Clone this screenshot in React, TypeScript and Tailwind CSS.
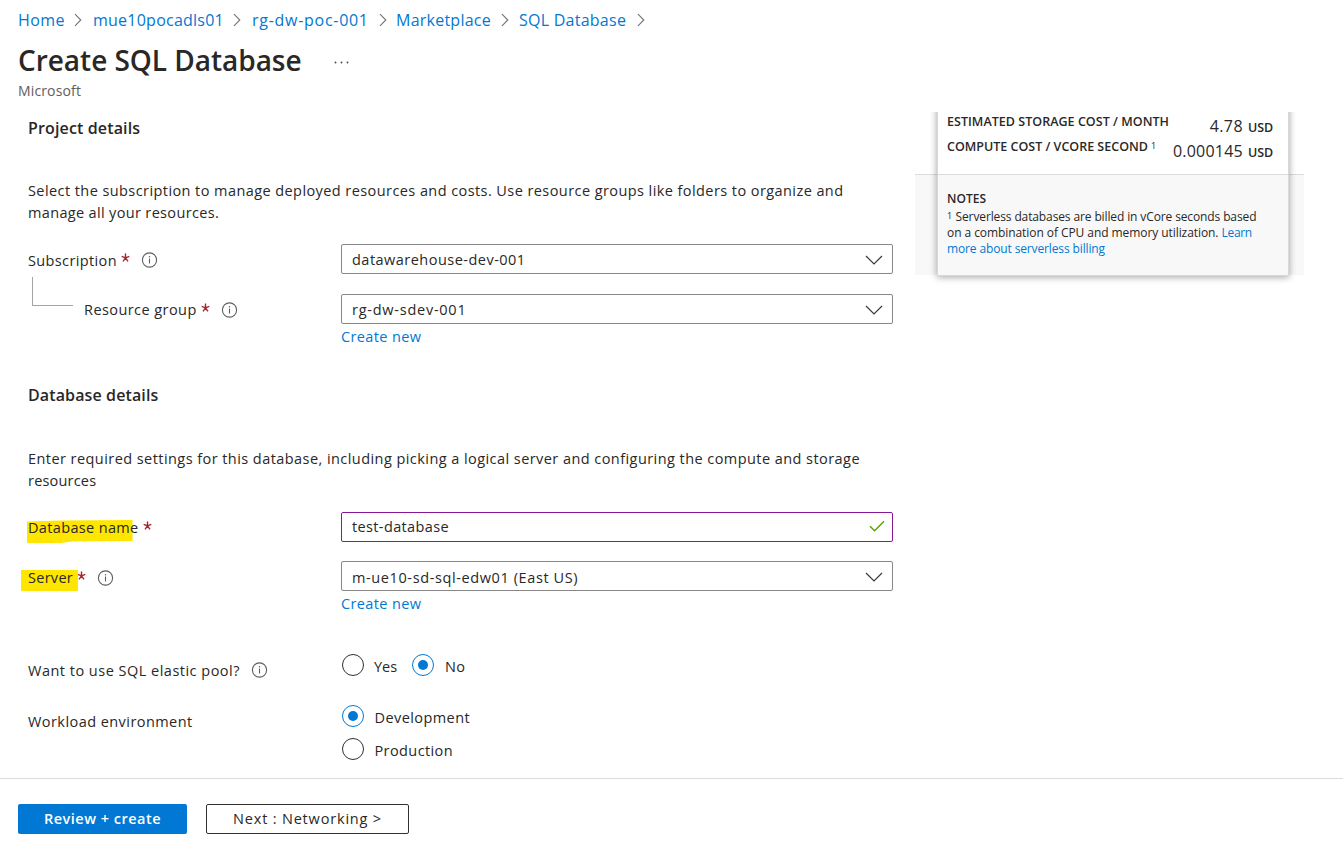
import React, { type ReactNode } from "react";

function Separator() {
  return (
    <svg width="8" height="14" viewBox="0 0 8 14" fill="none" stroke="#767472" strokeWidth="1.1" className="shrink-0">
      <path d="M1 1.2 6.8 7 1 12.8" />
    </svg>
  );
}

function InfoIcon() {
  return (
    <svg width="17" height="16" viewBox="0 0 17 16" fill="none" stroke="#605e5c" className="shrink-0">
      <circle cx="8.5" cy="8" r="7.1" strokeWidth="1.1" />
      <path d="M8.5 6.5v5" strokeWidth="1.1" />
      <path d="M8.5 4.1v1.3" strokeWidth="1.2" />
    </svg>
  );
}

function Required() {
  return (
    <svg width="9" height="9" viewBox="0 0 9 9" stroke="#a4262c" strokeWidth="1.4" className="mr-px mb-[5px] ml-[4px] shrink-0">
      <path d="M4.5 4.8V.6M4.5 4.8.7 3.4M4.5 4.8l3.8-1.4M4.5 4.8 2 8.3M4.5 4.8 7 8.3" />
    </svg>
  );
}

function Select({ children }: { children: ReactNode }) {
  return (
    <div className="flex h-[30px] w-[552px] items-center justify-between rounded-[2px] border border-[#8a8886] pr-[9px] pl-[10px]">
      {children}
      <svg width="18" height="10" viewBox="0 0 18 10" fill="none" stroke="#3b3a39" strokeWidth="1.2" className="mt-px">
        <path d="m1 1 8 8 8-8" />
      </svg>
    </div>
  );
}

function Radio({ checked = false }: { checked?: boolean }) {
  return (
    <span
      className={
        checked
          ? "flex size-[22px] shrink-0 items-center justify-center rounded-full border border-[#0078d4]"
          : "flex size-[22px] shrink-0 rounded-full border border-[#323130]"
      }
    >
      {checked && <span className="size-[10px] rounded-full bg-[#0078d4]" />}
    </span>
  );
}

function CostCard() {
  return (
    <aside className="ml-[22px] flex h-[176px] w-[389px] overflow-hidden">
      <div className="w-[22px] pt-[62px]">
        <div className="h-[101px] border-t border-[#dcdcdc] bg-[#f8f8f8]" />
      </div>
      <div className="z-10 -mt-2 h-[172px] w-[352px] border border-[#d5d8dc] bg-white shadow-[0_1px_7px_rgba(0,0,0,0.38)]">
        <div className="flex h-[69px] justify-between pt-[4px] pr-[15px] pl-[9px]">
          <div className="text-[12.5px] leading-[25px] font-semibold whitespace-nowrap">
            <div className="tracking-[0.035px]">ESTIMATED STORAGE COST / MONTH</div>
            <div className="flex tracking-[0px]">
              COMPUTE COST / VCORE SECOND
              <span className="ml-[3px] text-[9px] leading-[23px] font-normal">1</span>
            </div>
          </div>
          <div className="pt-[5px] text-right text-[16px] leading-[25px] whitespace-nowrap">
            <div className="h-[25px] tracking-[0.4px]">
              4.78<span className="ml-[5px] text-[12.5px] font-semibold tracking-[-0.1px]">USD</span>
            </div>
            <div className="h-[25px] tracking-[0.22px]">
              0.000145<span className="ml-[5px] text-[12.5px] font-semibold tracking-[-0.1px]">USD</span>
            </div>
          </div>
        </div>
        <div className="h-[101px] border-t border-[#dcdcdc] bg-[#f8f8f8] pt-[16px] pl-[9px] text-[12px] leading-4 whitespace-nowrap">
          <div className="mb-[2px] font-semibold tracking-[0.05px]">NOTES</div>
          <div className="flex tracking-[-0.12px]">
            <span className="mr-[3.5px] text-[9px] leading-[14px]">1</span>Serverless databases are billed in vCore seconds based
          </div>
          <div className="tracking-[-0.07px]">
            on a combination of CPU and memory utilization.{" "}
            <a className="tracking-[-0.3px] text-[#0078d4]">Learn</a>
          </div>
          <a className="block tracking-[-0.13px] text-[#0078d4]">more about serverless billing</a>
        </div>
      </div>
      <div className="w-[15px] pt-[62px]">
        <div className="h-[101px] border-t border-[#dcdcdc] bg-[#f8f8f8]" />
      </div>
    </aside>
  );
}

export default function App() {
  return (
    <div className="flex h-[842px] w-[1343px] flex-col overflow-hidden bg-white font-['Open_Sans',sans-serif] text-[14.5px] tracking-[0.37px] text-[#292827]">
      <header className="h-[112px] shrink-0 pl-[18px]">
        <nav className="flex h-[40px] items-center text-[16px] tracking-[0.24px] whitespace-nowrap text-[#0078d4]">
          <a className="w-[56px] tracking-[0.4px]">Home</a>
          <Separator />
          <a className="ml-[11px] w-[140px]">mue10pocadls01</a>
          <Separator />
          <a className="ml-[11px] w-[127px] tracking-[0.72px]">rg-dw-poc-001</a>
          <Separator />
          <a className="ml-[9px] w-[105px]">Marketplace</a>
          <Separator />
          <a className="ml-[10px] w-[118px] tracking-[0.25px]">SQL Database</a>
          <Separator />
        </nav>
        <div className="flex h-[41px] items-center">
          <h1 className="-mt-[2px] w-[316px] text-[28px] leading-[40px] font-semibold tracking-[-0.03px] whitespace-nowrap">Create SQL Database</h1>
          <svg width="15" height="3" viewBox="0 0 15 3" fill="#494847" className="mt-[3px]">
            <circle cx="1.5" cy="1.5" r=".9" />
            <circle cx="7.5" cy="1.5" r=".9" />
            <circle cx="13.5" cy="1.5" r=".9" />
          </svg>
        </div>
        <p className="text-[14px] leading-[20px] tracking-[0.14px] text-[#605e5c]">Microsoft</p>
      </header>

      <main className="flex h-[666px] shrink-0">
        <div className="w-[893px] shrink-0 pl-[28px] whitespace-nowrap">
          <h2 className="h-[68px] pt-[3px] text-[16px] leading-[26px] font-semibold tracking-[0.14px]">Project details</h2>
          <p className="h-[64px] leading-[22px]">
            <span className="block tracking-[0.424px]">Select the subscription to manage deployed resources and costs. Use resource groups like folders to organize and</span>
            <span className="block tracking-[0.34px]">manage all your resources.</span>
          </p>
          <div className="flex h-[50px]">
            <div className="flex h-8 w-[313px] items-center">
              <span className="pt-px">Subscription</span>
              <Required />
              <span className="ml-[10px]"><InfoIcon /></span>
            </div>
            <Select><span className="pt-px tracking-[0.48px]">datawarehouse-dev-001</span></Select>
          </div>
          <div className="flex h-[87px]">
            <div className="flex h-8 w-[313px]">
              <div className="-mt-[17px] mr-[11px] ml-[4px] h-[29px] w-[41px] border-b border-l border-[#a6a4a2]" />
              <div className="flex h-8 items-center">
                <span className="tracking-[0.43px]">Resource group</span>
                <Required />
                <span className="ml-[10px]"><InfoIcon /></span>
              </div>
            </div>
            <div>
              <Select><span className="pt-px tracking-[0.75px]">rg-dw-sdev-001</span></Select>
              <a className="mt-[2px] block leading-[22px] text-[#0078d4]">Create new</a>
            </div>
          </div>
          <h2 className="h-[67px] pt-px text-[16px] leading-[26px] font-semibold tracking-[0.12px]">Database details</h2>
          <p className="h-[64px] leading-[22px]">
            <span className="block tracking-[0.44px]">Enter required settings for this database, including picking a logical server and configuring the compute and storage</span>
            <span className="block tracking-[0.2px]">resources</span>
          </p>
          <div className="flex h-[49px]">
            <div className="flex w-[313px]">
              <div className="relative flex h-[31px] items-center">
                <svg width="106" height="24" viewBox="0 0 106 24" className="absolute top-[8px] -left-px" fill="#ffe600">
                  <path d="M0 1.5 34 .5 105.5 0V21L45 21.5 34 23H0Z" />
                </svg>
                <span className="relative tracking-[0.35px]">Database name</span>
                <Required />
              </div>
            </div>
            <div className="flex h-[30px] w-[552px] items-center justify-between rounded-[2px] border border-[#881798] pr-[7px] pb-px pl-[10px]">
              test-database
              <svg width="16" height="12" viewBox="0 0 16 12" fill="none" stroke="#57a300" strokeWidth="1.4" className="-mt-px">
                <path d="m1 6.2 4.6 4.6L15 1.2" />
              </svg>
            </div>
          </div>
          <div className="flex h-[90px]">
            <div className="flex w-[313px]">
              <div className="relative flex h-[33px] items-center">
                <div className="absolute top-[9px] -left-[7px] h-[21px] w-[57px] bg-[#ffe600]" />
                <span className="relative tracking-[0.28px]">Server</span>
                <Required />
                <span className="ml-[10px]"><InfoIcon /></span>
              </div>
            </div>
            <div>
              <Select><span className="pt-[3px] tracking-[0.61px]">m-ue10-sd-sql-edw01 (East US)</span></Select>
              <a className="mt-[2px] block leading-[22px] text-[#0078d4]">Create new</a>
            </div>
          </div>
          <div className="flex h-[54px]">
            <div className="flex h-[37px] w-[314px] items-center tracking-[0.49px]">
              <span className="pt-[2px]">Want to use SQL elastic pool?</span>
              <span className="ml-[11px]"><InfoIcon /></span>
            </div>
            <div className="flex h-[28px] items-center">
              <Radio />
              <span className="ml-[10px] w-[38px] pt-[3px] tracking-normal">Yes</span>
              <Radio checked />
              <span className="ml-[11px] pt-[3px] tracking-[0.4px]">No</span>
            </div>
          </div>
          <div className="flex">
            <div className="h-[31px] w-[314px] pt-px leading-[31px] tracking-[0.44px]">Workload environment</div>
            <div className="flex flex-col gap-[11px]">
              <div className="flex h-[22px] items-center">
                <Radio checked />
                <span className="ml-[10.5px] pt-[3px] tracking-[0.42px]">Development</span>
              </div>
              <div className="flex h-[22px] items-center">
                <Radio />
                <span className="ml-[10.5px] pt-[3px] tracking-[0.4px]">Production</span>
              </div>
            </div>
          </div>
        </div>
        <CostCard />
      </main>

      <footer className="flex h-[64px] shrink-0 gap-[19px] border-t border-[#dcdcdc] pt-[25px] pl-[18px]">
        <button className="h-[30px] w-[169px] rounded-[2px] bg-[#0078d4] pb-px font-semibold tracking-[0.5px] text-white">Review + create</button>
        <button className="h-[30px] w-[203px] rounded-[2px] border border-[#323130] pb-px font-medium tracking-[0.82px]">Next : Networking &gt;</button>
      </footer>
    </div>
  );
}
